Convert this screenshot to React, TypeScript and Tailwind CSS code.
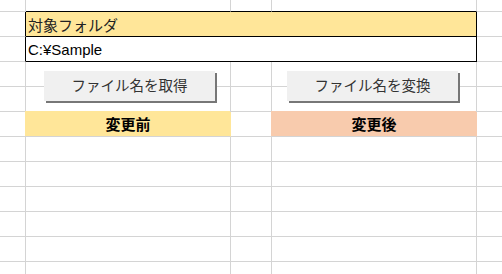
import React from "react";

const G = "border-[#d4d4d4]";

function Cell({ className = "", children }: { className?: string; children?: React.ReactNode }) {
  return <div className={`border-r border-b border-solid ${className}`}>{children}</div>;
}

export default function App() {
  const plainRows = [3, 4, 6, 7, 8, 9, 10, 11];
  return (
    <div
      className="relative h-[274px] w-[502px] overflow-hidden bg-white"
      style={{ fontFamily: '"Liberation Sans", "Noto Sans CJK JP", sans-serif' }}
    >
      <div className="grid grid-cols-[26px_205px_41px_205px_26px] grid-rows-[12px_repeat(11,25px)]">
        {/* row 0 */}
        <Cell className={G} />
        <Cell className="border-r-[#d4d4d4] border-b-black" />
        <Cell className="border-r-[#d4d4d4] border-b-black" />
        <Cell className="border-r-[#d4d4d4] border-b-black" />
        <Cell className={G} />
        {/* row 1 */}
        <Cell className="border-r-black border-b-[#d4d4d4]" />
        <div className="col-span-3 flex items-center border-r border-b border-black bg-[#ffe699] px-[2px] pt-[2px] text-[15px] leading-none text-[#222]">
          対象フォルダ
        </div>
        <Cell className={G} />
        {/* row 2 */}
        <Cell className="border-r-black border-b-[#d4d4d4]" />
        <div className="col-span-3 flex items-center border-r border-b border-black bg-white px-[2px] text-[15px] leading-none text-black">
          C:¥Sample
        </div>
        <Cell className={G} />
        {plainRows.slice(0, 2).map((r) => (
          <React.Fragment key={r}>
            <Cell className={G} />
            <Cell className={G} />
            <Cell className={G} />
            <Cell className={G} />
            <Cell className={G} />
          </React.Fragment>
        ))}
        {/* row 5 header */}
        <Cell className={G} />
        <div className="flex items-center justify-center border-r border-b border-r-[#ffe699] border-b-[#d4d4d4] bg-[#ffe699] text-[15px] font-bold leading-none text-black shadow-[-1px_-1px_0_0_#ffe699]">
          変更前
        </div>
        <Cell className={G} />
        <div className="flex items-center justify-center border-r border-b border-r-[#f8cbad] border-b-[#d4d4d4] bg-[#f8cbad] text-[15px] font-bold leading-none text-black shadow-[-1px_-1px_0_0_#f8cbad]">
          変更後
        </div>
        <Cell className={G} />
        {plainRows.slice(2).map((r) => (
          <React.Fragment key={r}>
            <Cell className={G} />
            <Cell className={G} />
            <Cell className={G} />
            <Cell className={G} />
            <Cell className={G} />
          </React.Fragment>
        ))}
      </div>

      {/* floating button shapes */}
      <div className="absolute left-[44px] top-[71px] flex h-[30px] w-[171px] items-center justify-center bg-[#f0f0f0] text-[14.5px] leading-none text-[#333] shadow-[2px_2px_0_0_#777]">
        ファイル名を取得
      </div>
      <div className="absolute left-[287px] top-[71px] flex h-[30px] w-[171px] items-center justify-center bg-[#f0f0f0] text-[14.5px] leading-none text-[#333] shadow-[2px_2px_0_0_#777]">
        ファイル名を変換
      </div>
    </div>
  );
}
